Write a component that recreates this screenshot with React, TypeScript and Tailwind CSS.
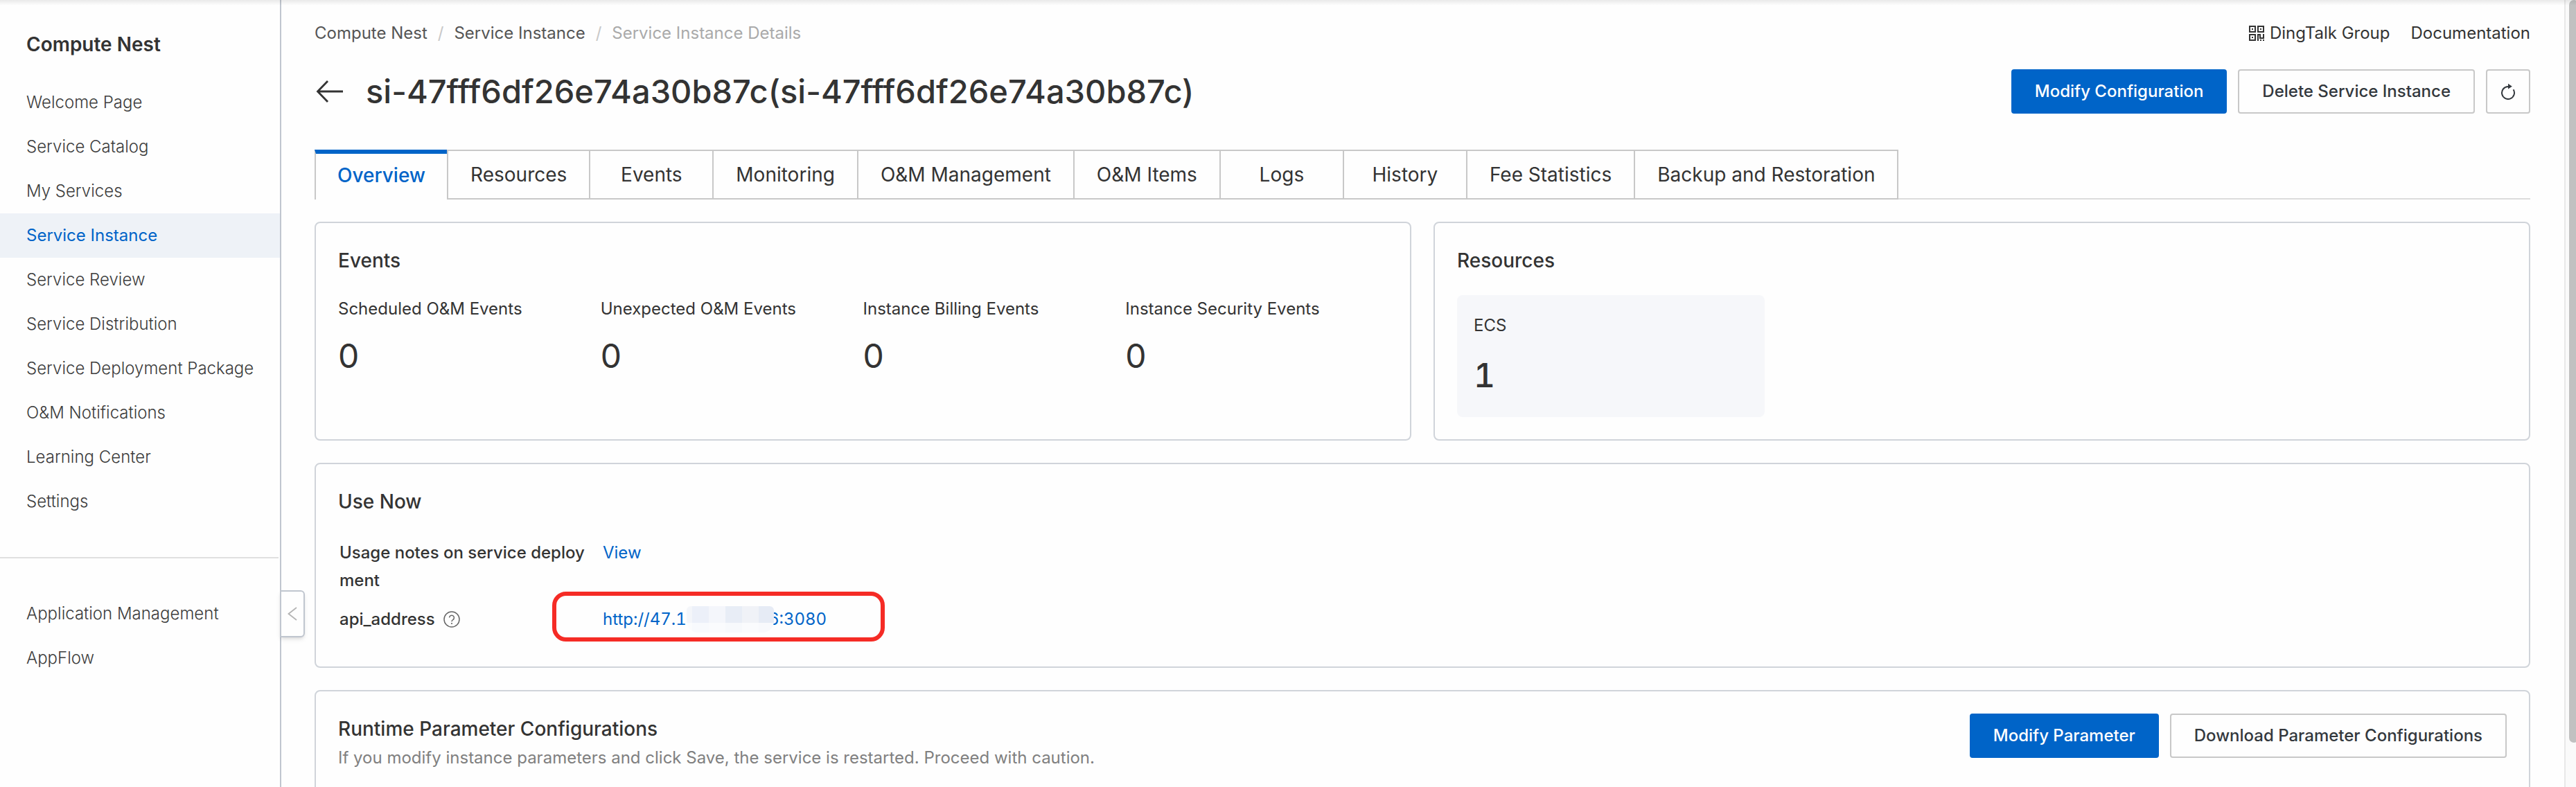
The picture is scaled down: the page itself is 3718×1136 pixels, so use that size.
import React from "react";

const mainMenu = [
  "Welcome Page",
  "Service Catalog",
  "My Services",
  "Service Instance",
  "Service Review",
  "Service Distribution",
  "Service Deployment Package",
  "O&M Notifications",
  "Learning Center",
  "Settings",
];
const extraMenu = ["Application Management", "AppFlow"];

const tabs = [
  "Overview",
  "Resources",
  "Events",
  "Monitoring",
  "O&M Management",
  "O&M Items",
  "Logs",
  "History",
  "Fee Statistics",
  "Backup and Restoration",
];

const eventCounts = [
  { label: "Scheduled O&M Events", count: 0 },
  { label: "Unexpected O&M Events", count: 0 },
  { label: "Instance Billing Events", count: 0 },
  { label: "Instance Security Events", count: 0 },
];

function MenuItem({ label, active = false }: { label: string; active?: boolean }) {
  return (
    <li>
      <a
        href="#"
        aria-current={active ? "page" : undefined}
        className={
          active
            ? "block bg-[#eef2f7] pl-[38px] text-[24px] leading-[64px] whitespace-nowrap text-[#0064c8]"
            : "block pl-[38px] text-[24px] leading-[64px] font-light whitespace-nowrap text-[#3c3c3c]"
        }
      >
        {label}
      </a>
    </li>
  );
}

function Sidebar() {
  return (
    <aside className="relative z-10 w-[406px] shrink-0 border-r-2 border-[#c0c6cf]">
      <h2 className="mb-7 px-[38px] pt-10 text-[28px] leading-[48px] font-semibold text-[#333333]">
        Compute Nest
      </h2>
      <nav>
        <ul>
          {mainMenu.map((label) => (
            <MenuItem key={label} label={label} active={label === "Service Instance"} />
          ))}
        </ul>
        <hr className="my-12 mr-0.5 border-t-2 border-[#e0e0e0]" />
        <ul>
          {extraMenu.map((label) => (
            <MenuItem key={label} label={label} />
          ))}
        </ul>
      </nav>
      <button
        type="button"
        aria-label="Collapse menu"
        className="absolute top-3/4 -right-9 flex h-[68px] w-9 items-center justify-center rounded-r-md border-2 border-[#c0c6cf] bg-[#fefefe] shadow-md"
      >
        <svg viewBox="0 0 14 20" className="h-5 w-3.5" fill="none" stroke="#b4b4b4" strokeWidth="1.8">
          <path d="M13 1 1.5 10 13 19" />
        </svg>
      </button>
    </aside>
  );
}

function QrIcon() {
  return (
    <svg viewBox="0 0 22 22" className="h-[22px] w-[22px]" fill="#333333">
      <path
        fillRule="evenodd"
        d="M0 0h10v10H0zM2 2v6h6V2zM12 0h10v10H12zM14 2v6h6V2zM0 12h10v10H0zM2 14v6h6v-6z"
      />
      <path d="M4 4h2v2H4zM16 4h2v2h-2zM4 16h2v2H4zM12 12h5v5h3v-5h2v7h-7v-5h-1v8h-2zM16 20h2v2h-2zM20 20h2v2h-2z" />
    </svg>
  );
}

function RefreshIcon() {
  return (
    <svg viewBox="0 0 22 24" className="h-6 w-[22px]" fill="none" stroke="#33383d" strokeWidth="2">
      <path d="M18.6 9.2A9 9 0 1 1 11 5h1" />
      <path d="M11 0.8 16.8 4.8 11 8.4z" fill="#33383d" stroke="none" />
    </svg>
  );
}

function HelpIcon() {
  return (
    <svg viewBox="0 0 24 24" className="h-6 w-6" fill="none" stroke="#666666" strokeWidth="1.5">
      <circle cx="12" cy="12" r="11" />
      <path d="M8.6 9.6a3.4 3.4 0 1 1 5.2 2.9c-1.2.8-1.8 1.4-1.8 2.7" />
      <circle cx="12" cy="18" r="1.1" fill="#666666" stroke="none" />
    </svg>
  );
}

function PrimaryButton({ children }: { children: React.ReactNode }) {
  return (
    <button
      type="button"
      className="h-16 rounded border-2 border-[#0064c8] bg-[#0064c8] px-8 text-[24px] font-medium text-white"
    >
      {children}
    </button>
  );
}

function SecondaryButton({ children }: { children: React.ReactNode }) {
  return (
    <button
      type="button"
      className="h-16 rounded border-2 border-[#c8c8c8] px-[33px] text-[24px] font-medium text-[#33383d]"
    >
      {children}
    </button>
  );
}

function Card({ className, children }: { className: string; children: React.ReactNode }) {
  return (
    <section className={`rounded-lg border-2 border-[#d0d4da] px-8 pt-8 ${className}`}>
      {children}
    </section>
  );
}

function CardTitle({ children }: { children: React.ReactNode }) {
  return <h2 className="text-[28px] leading-[44px] font-medium">{children}</h2>;
}

function RedactedPatch() {
  return (
    <span
      aria-hidden="true"
      className="relative -mr-2 grid h-[38px] grid-cols-[8px_24px_24px_24px_24px_22px] grid-rows-[24px_14px] overflow-hidden rounded-t-md rounded-b-2xl"
    >
      <span className="bg-[#f4f6fa]" />
      <span className="bg-[#ecf0f9]" />
      <span className="bg-[#f4f6fb]" />
      <span className="bg-[#e8edf6]" />
      <span className="bg-[#f0f2f7]" />
      <span className="bg-[#e6ebf5]" />
      <span className="bg-[#fbfcfd]" />
      <span className="bg-[#f8fafd]" />
      <span className="bg-[#fafbfd]" />
      <span className="bg-[#f7f9fc]" />
      <span className="bg-[#fafbfd]" />
      <span className="bg-[#f8f9fc]" />
    </span>
  );
}

function Header() {
  return (
    <header>
      <div className="flex items-center justify-between text-[24px] leading-10">
        <nav aria-label="Breadcrumb">
          <ol className="flex text-[#555555]">
            <li>
              <a href="#">Compute Nest</a>
            </li>
            <li aria-hidden="true" className="px-[15px] text-[#c8c8c8]">/</li>
            <li>
              <a href="#">Service Instance</a>
            </li>
            <li aria-hidden="true" className="px-[15px] text-[#c8c8c8]">/</li>
            <li className="text-[#aaaaaa]">Service Instance Details</li>
          </ol>
        </nav>
        <div className="flex gap-[30px]">
          <a href="#" className="flex items-center gap-2">
            <QrIcon />
            DingTalk Group
          </a>
          <a href="#">Documentation</a>
        </div>
      </div>
      <div className="mt-8 flex items-center justify-between">
        <div className="flex items-center gap-8 pl-0.5">
          <button type="button" aria-label="Back">
            <svg viewBox="0 0 40 32" className="h-8 w-10" fill="none" stroke="#333333" strokeWidth="2.8">
              <path d="M39 16H2.5M17 1 2.5 16 17 31" />
            </svg>
          </button>
          <h1 className="text-[47px] leading-[64px] font-medium">
            si-47fff6df26e74a30b87c(si-47fff6df26e74a30b87c)
          </h1>
        </div>
        <div className="flex gap-4">
          <PrimaryButton>Modify Configuration</PrimaryButton>
          <SecondaryButton>Delete Service Instance</SecondaryButton>
          <button
            type="button"
            aria-label="Refresh"
            className="flex size-16 items-center justify-center rounded border-2 border-[#c8c8c8]"
          >
            <RefreshIcon />
          </button>
        </div>
      </div>
    </header>
  );
}

function TabBar() {
  return (
    <div role="tablist" className="mt-13 flex h-[72px] border-b-2 border-[#dcdcdc] pl-0.5 text-[28px]">
      {tabs.map((label, i) => (
        <button
          key={label}
          type="button"
          role="tab"
          aria-selected={i === 0}
          className={
            i === 0
              ? "-mb-0.5 -ml-0.5 min-w-[180px] border-x-2 border-t-6 border-x-[#c8c8c8] border-t-[#0064c8] bg-[#fefefe] px-[31px] pb-1 font-medium text-[#0064c8]"
              : "-mb-0.5 -ml-0.5 min-w-[180px] border-2 border-[#c8c8c8] px-8"
          }
        >
          {label}
        </button>
      ))}
    </div>
  );
}

export default function App() {
  return (
    <div className="relative flex h-screen overflow-hidden bg-[#fefefe] font-['Inter',sans-serif] text-[#333333]">
      <div className="pointer-events-none absolute inset-x-0 top-0 z-20 h-2 bg-linear-to-b from-black/8 to-transparent" />
      <Sidebar />
      <main className="min-w-0 flex-1 overflow-hidden pt-7 pr-[49px] pl-12">
        <Header />
        <TabBar />
        <div className="mt-8 grid grid-cols-2 gap-8">
          <Card className="pb-8">
            <CardTitle>Events</CardTitle>
            <dl className="mt-7 grid grid-cols-4">
              {eventCounts.map((e) => (
                <div key={e.label}>
                  <dt className="text-[24px] leading-10">{e.label}</dt>
                  <dd className="mt-4 text-[48px] leading-[64px]">{e.count}</dd>
                </div>
              ))}
            </dl>
          </Card>
          <Card className="pb-8">
            <CardTitle>Resources</CardTitle>
            <dl className="mt-7 w-[444px] rounded-lg bg-[#f6f7fa] px-6 pt-6 pb-7">
              <dt className="text-[24px] leading-10">ECS</dt>
              <dd className="mt-5 text-[48px] leading-[64px] font-medium tabular-nums">1</dd>
            </dl>
          </Card>
        </div>
        <Card className="mt-8 pb-12">
          <CardTitle>Use Now</CardTitle>
          <dl className="mt-8 grid grid-cols-[360px_1fr] gap-x-5 gap-y-4 px-0.5 text-[24px] leading-10">
            <dt className="font-medium break-all">Usage notes on service deployment</dt>
            <dd>
              <a href="#" className="text-[#0064c8]">View</a>
            </dd>
            <dt className="flex items-center gap-3 font-medium">
              api_address
              <HelpIcon />
            </dt>
            <dd className="relative">
              <a href="#" className="flex w-fit items-center text-[#0064c8] tabular-nums">
                <span>http://47.1</span>
                <RedactedPatch />
                <span>6:3080</span>
              </a>
              <div className="pointer-events-none absolute -top-5 -left-[73px] h-[72px] w-[480px] rounded-[20px] border-6 border-[#f52b25]" />
            </dd>
          </dl>
        </Card>
        <Card className="mt-8 pb-12">
          <div className="flex items-start justify-between">
            <div>
              <CardTitle>Runtime Parameter Configurations</CardTitle>
              <p className="text-[24px] leading-10 text-[#808080]">
                If you modify instance parameters and click Save, the service is restarted. Proceed with caution.
              </p>
            </div>
            <div className="flex gap-4">
              <PrimaryButton>Modify Parameter</PrimaryButton>
              <SecondaryButton>Download Parameter Configurations</SecondaryButton>
            </div>
          </div>
        </Card>
      </main>
      <div className="w-[17px] shrink-0 overflow-hidden border-l-2 border-[#e8e8e8] bg-[#fafafa] pl-[5px]">
        <div className="h-[94.4%] w-3.5 rounded-full bg-[#c1c1c1]" />
      </div>
    </div>
  );
}
